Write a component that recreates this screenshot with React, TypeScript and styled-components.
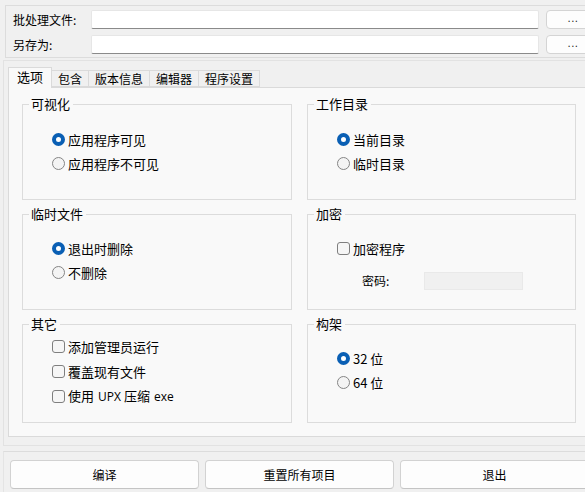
import React from 'react';
import styled, { createGlobalStyle } from 'styled-components';

const GlobalStyle = createGlobalStyle`
  html, body {
    margin: 0;
    padding: 0;
    background: #f0f0f0;
    overflow: hidden;
  }
  body {
    font-family: "Noto Sans CJK SC", "Microsoft YaHei", sans-serif;
    font-size: 12px;
    color: #000;
  }
`;

const Window = styled.div`
  width: 620px;
  height: 492px;
  display: flex;
  flex-direction: column;
  background: #f0f0f0;
`;

const PathPanel = styled.div`
  margin: 5px 0 0 5px;
  border: 1px solid #dcdcdc;
  border-right: none;
  padding: 4px 0 3px 7px;
  display: grid;
  grid-template-columns: 71px 448px 54px;
  column-gap: 7px;
  row-gap: 6px;
  align-items: center;
`;

const FieldLabel = styled.span`
  line-height: 16px;
  white-space: nowrap;
`;

const PathInput = styled.input`
  box-sizing: border-box;
  height: 19px;
  margin: 0;
  padding: 0 4px;
  background: #fff;
  border: 1px solid #e6e6e6;
  border-bottom-color: #8a8a8a;
  border-radius: 2px;
  font: inherit;
  outline: none;
`;

const BrowseButton = styled.button`
  box-sizing: border-box;
  height: 19px;
  margin: 0;
  padding: 0 0 3px;
  background: #fdfdfd;
  border: 1px solid #d4d4d4;
  border-radius: 4px;
  font-family: "DejaVu Sans", sans-serif;
  font-size: 10px;
  letter-spacing: 0.5px;
  color: #222;
`;

const TabFrame = styled.div`
  margin: 2px 0 0 3px;
  height: 386px;
  box-sizing: border-box;
  border: 1px solid #e2e2e2;
  border-right: none;
  padding: 6px 0 0 4px;
  display: flex;
  flex-direction: column;
`;

const TabStrip = styled.div`
  display: flex;
  align-items: flex-end;
  height: 20px;
  position: relative;
  z-index: 1;
`;

const Tab = styled.div<{ $active?: boolean }>`
  box-sizing: border-box;
  height: ${p => (p.$active ? '21px' : '17px')};
  padding: ${p => (p.$active ? '1px 8px 0' : '0 6px')};
  margin-bottom: ${p => (p.$active ? '-1px' : '0')};
  background: ${p => (p.$active ? '#f9f9f9' : '#f0f0f0')};
  border: 1px solid #dadada;
  border-bottom: ${p => (p.$active ? 'none' : '1px solid #dadada')};
  border-left: ${p => (p.$active ? '1px solid #dadada' : 'none')};
  line-height: 16px;
  font-size: ${p => (p.$active ? '13px' : '12px')};
  white-space: nowrap;
`;

const TabPage = styled.div`
  height: 350px;
  box-sizing: border-box;
  background: #f9f9f9;
  border: 1px solid #dadada;
  border-right: none;
  padding: 8px 0 0 13px;
  display: grid;
  grid-template-columns: 270px 269px;
  grid-template-rows: 104px 104px 107px;
  column-gap: 15px;
  row-gap: 6px;
`;

const Group = styled.fieldset`
  margin: 0;
  min-width: 0;
  box-sizing: border-box;
  border: 1px solid #dcdcdc;
  padding: 0;
`;

const GroupTitle = styled.legend`
  margin-left: 6px;
  padding: 0 3px 0 2px;
  line-height: 16px;
  font-size: 13px;
`;

const GroupBody = styled.div<{ $top: number; $gap: number }>`
  padding: ${p => p.$top}px 0 0 29px;
  display: flex;
  flex-direction: column;
  gap: ${p => p.$gap}px;
`;

const Option = styled.label`
  display: flex;
  align-items: center;
  gap: 3px;
  height: 17px;
  line-height: 16px;
  font-size: 13px;
  white-space: nowrap;
`;

const RadioDot = styled.span<{ $checked?: boolean }>`
  box-sizing: border-box;
  width: 13px;
  height: 13px;
  border-radius: 50%;
  flex: none;
  background: ${p => (p.$checked ? '#fff' : '#f4f4f4')};
  border: ${p => (p.$checked ? '4px solid #0a5fb4' : '1px solid #858585')};
`;

const CheckBox = styled.span`
  box-sizing: border-box;
  width: 13px;
  height: 13px;
  flex: none;
  border-radius: 3px;
  border: 1px solid #7f7f7f;
  background: #f6f6f6;
`;

// Latin words inside Chinese captions, spaced like a narrow space
const Latin = styled.span`
  font-family: "Open Sans", "DejaVu Sans", sans-serif;
  font-size: 12px;
  margin: 0 3px 0 4px;
`;

const PasswordRow = styled.div`
  display: flex;
  align-items: center;
  margin: 15px 0 0 25px;
`;

const PasswordLabel = styled.span`
  width: 62px;
  line-height: 16px;
`;

const PasswordInput = styled.input`
  box-sizing: border-box;
  width: 99px;
  height: 18px;
  margin: 0;
  background: #f0f0f0;
  border: 1px solid #e9e9e9;
  outline: none;
`;

const ButtonBar = styled.div`
  margin: 5px 0 0 3px;
  border-top: 1px solid #dcdcdc;
  border-left: 1px solid #e4e4e4;
  padding: 8px 0 0 6px;
  flex: 1;
  display: flex;
  gap: 6px;
`;

const ActionButton = styled.button`
  box-sizing: border-box;
  width: 189px;
  height: 29px;
  margin: 0;
  background: #fdfdfd;
  border: 1px solid #d2d2d2;
  border-bottom-color: #c4c4c4;
  border-radius: 4px;
  font-family: "Noto Sans CJK SC", sans-serif;
  font-size: 12px;
  color: #000;
`;

const tabs = ['选项', '包含', '版本信息', '编辑器', '程序设置'];

const Radio: React.FC<{ checked?: boolean; children: React.ReactNode }> = ({ checked, children }) => (
  <Option>
    <RadioDot $checked={checked} />
    {children}
  </Option>
);

const Check: React.FC<{ children: React.ReactNode }> = ({ children }) => (
  <Option>
    <CheckBox />
    {children}
  </Option>
);

export default function App() {
  return (
    <Window>
      <GlobalStyle />
      <PathPanel>
        <FieldLabel>批处理文件:</FieldLabel>
        <PathInput />
        <BrowseButton>...</BrowseButton>
        <FieldLabel>另存为:</FieldLabel>
        <PathInput />
        <BrowseButton>...</BrowseButton>
      </PathPanel>

      <TabFrame>
        <TabStrip>
          {tabs.map((t, i) => (
            <Tab key={t} $active={i === 0}>{t}</Tab>
          ))}
        </TabStrip>
        <TabPage>
          <Group>
            <GroupTitle>可视化</GroupTitle>
            <GroupBody $top={19} $gap={7}>
              <Radio checked>应用程序可见</Radio>
              <Radio>应用程序不可见</Radio>
            </GroupBody>
          </Group>
          <Group>
            <GroupTitle>工作目录</GroupTitle>
            <GroupBody $top={19} $gap={7}>
              <Radio checked>当前目录</Radio>
              <Radio>临时目录</Radio>
            </GroupBody>
          </Group>

          <Group>
            <GroupTitle>临时文件</GroupTitle>
            <GroupBody $top={18} $gap={7}>
              <Radio checked>退出时删除</Radio>
              <Radio>不删除</Radio>
            </GroupBody>
          </Group>
          <Group>
            <GroupTitle>加密</GroupTitle>
            <GroupBody $top={18} $gap={0}>
              <Check>加密程序</Check>
              <PasswordRow>
                <PasswordLabel>密码:</PasswordLabel>
                <PasswordInput disabled />
              </PasswordRow>
            </GroupBody>
          </Group>

          <Group>
            <GroupTitle>其它</GroupTitle>
            <GroupBody $top={6} $gap={8}>
              <Check>添加管理员运行</Check>
              <Check>覆盖现有文件</Check>
              <Check><span>使用<Latin>UPX</Latin>压缩<Latin>exe</Latin></span></Check>
            </GroupBody>
          </Group>
          <Group>
            <GroupTitle>构架</GroupTitle>
            <GroupBody $top={18} $gap={7}>
              <Radio checked>32 位</Radio>
              <Radio>64 位</Radio>
            </GroupBody>
          </Group>
        </TabPage>
      </TabFrame>

      <ButtonBar>
        <ActionButton>编译</ActionButton>
        <ActionButton>重置所有项目</ActionButton>
        <ActionButton>退出</ActionButton>
      </ButtonBar>
    </Window>
  );
}
